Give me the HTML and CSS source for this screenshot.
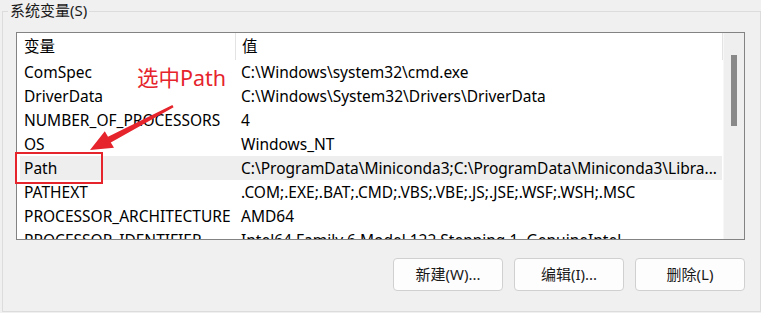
FILE: index.html
```html
<!DOCTYPE html>
<html>
<head>
<meta charset="utf-8">
<link rel="stylesheet" href="styles.css">
</head>
<body>
<div class="group">
  <div class="legend">系统变量(S)</div>
  <div class="list">
    <div class="table">
      <div class="header"><div class="c1">变量</div><div class="c2">值</div></div>
      <div class="row"><div class="c1">ComSpec</div><div class="c2">C:\Windows\system32\cmd.exe</div></div>
      <div class="row"><div class="c1">DriverData</div><div class="c2">C:\Windows\System32\Drivers\DriverData</div></div>
      <div class="row"><div class="c1">NUMBER_OF_PROCESSORS</div><div class="c2">4</div></div>
      <div class="row"><div class="c1">OS</div><div class="c2">Windows_NT</div></div>
      <div class="row sel"><div class="c1">Path</div><div class="c2">C:\ProgramData\Miniconda3;C:\ProgramData\Miniconda3\Libra...</div></div>
      <div class="row"><div class="c1">PATHEXT</div><div class="c2">.COM;.EXE;.BAT;.CMD;.VBS;.VBE;.JS;.JSE;.WSF;.WSH;.MSC</div></div>
      <div class="row"><div class="c1">PROCESSOR_ARCHITECTURE</div><div class="c2">AMD64</div></div>
      <div class="row"><div class="c1">PROCESSOR_IDENTIFIER</div><div class="c2">Intel64 Family 6 Model 122 Stepping 1, GenuineIntel</div></div>
    </div>
    <div class="scrollbar"><div class="thumb"></div></div>
  </div>
  <div class="buttons">
    <div class="btn">新建(W)...</div>
    <div class="btn">编辑(I)...</div>
    <div class="btn">删除(L)</div>
  </div>
</div>
<div class="note">选中Path</div>
<div class="redbox"></div>
<svg class="arrow" width="761" height="313" viewBox="0 0 761 313">
  <polygon points="173.6,107.2 172.4,105 108,136.8 104.8,131.2 90,150 114,147.8 110.8,142.6" fill="#e5242c"/>
</svg>
</body>
</html>
```

FILE: styles.css
```css
html, body {
  margin: 0;
  padding: 0;
  background: #f0f0f0;
}
body {
  width: 761px;
  height: 313px;
  overflow: hidden;
  position: relative;
  font-family: "Noto Sans", "Noto Sans CJK SC", sans-serif;
  font-size: 15.5px;
  color: #000;
}
.group {
  position: relative;
  margin: 11px 0 0 2px;
  width: 757px;
  height: 299px;
  border: 1px solid #dcdcdc;
}
.legend {
  position: absolute;
  top: -12px;
  left: 5px;
  padding: 0 2px;
  line-height: 20px;
  font-size: 15px;
  background: #f0f0f0;
  color: #1a1a1a;
}
.list {
  margin: 20px 0 0 13px;
  width: 727px;
  height: 206px;
  border: 1px solid #838383;
  background: #fff;
  display: flex;
  overflow: hidden;
}
.table {
  width: 706px;
  flex: none;
}
.header, .row {
  display: flex;
  white-space: nowrap;
}
.header {
  height: 27px;
  line-height: 27px;
}
.header .c1 {
  border-right: 1px solid #e3e3e3;
}
.header .c2 {
  border-right: 1px solid #e3e3e3;
}
.row {
  height: 24px;
  line-height: 24px;
}
.c1 {
  width: 211px;
  padding-left: 7px;
  flex: none;
  overflow: hidden;
}
.c2 {
  width: 480px;
  padding-left: 6px;
  flex: none;
  overflow: hidden;
}
.row.sel {
  background: #eeeeee;
  margin: 0 1px 0 3px;
}
.row.sel .c1 {
  padding-left: 4px;
}
.scrollbar {
  width: 21px;
  flex: none;
  background: #efefef;
  border-left: 1px solid #f7f7f7;
  box-sizing: border-box;
  padding: 22px 0 0 7px;
}
.thumb {
  width: 6px;
  height: 71px;
  background: #898989;
}
.buttons {
  display: flex;
  justify-content: flex-end;
  gap: 11px;
  margin-top: 18px;
  padding-right: 15px;
  font-size: 15px;
}
.btn {
  width: 108px;
  height: 31px;
  line-height: 31px;
  text-align: center;
  background: #fdfdfd;
  border: 1px solid #d0d0d0;
  border-radius: 4px;
  color: #1a1a1a;
}
.note {
  position: absolute;
  left: 137px;
  top: 63px;
  font-size: 21.5px;
  line-height: 30px;
  color: #e5242c;
  white-space: nowrap;
}
.redbox {
  position: absolute;
  left: 15px;
  top: 152px;
  width: 84px;
  height: 28px;
  border: 2px solid #e5242c;
}
.arrow {
  position: absolute;
  left: 0;
  top: 0;
}
```
